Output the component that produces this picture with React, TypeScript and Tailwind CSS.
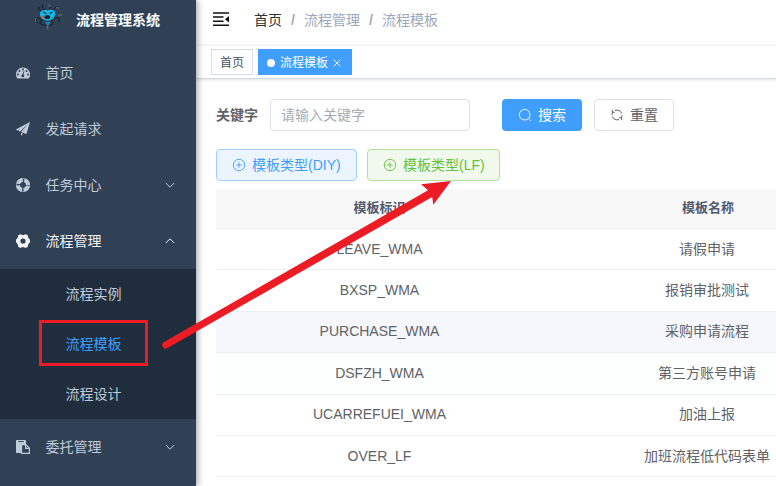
import React from "react";

function DashboardIcon() {
  return (
    <svg className="h-[14px] w-[14px]" viewBox="0 0 14 14">
      <path fill="currentColor" d="M7 1.5a7 7 0 0 0-7 7c0 1.4.4 2.7 1.1 3.8.1.2.3.2.5.2h10.8c.2 0 .4 0 .5-.2A7 7 0 0 0 7 1.5Z" />
      <g fill="#304156">
        <circle cx="2" cy="8.5" r="1" />
        <circle cx="3.5" cy="5" r="1" />
        <circle cx="7" cy="3.5" r="1" />
        <circle cx="10.5" cy="5" r="1" />
        <circle cx="12" cy="8.5" r="1" />
        <circle cx="6.8" cy="9.7" r="1.5" />
      </g>
      <path d="M6.8 9.5 7.8 5.6" stroke="#304156" strokeWidth="0.9" strokeLinecap="round" />
    </svg>
  );
}

function PlaneIcon() {
  return (
    <svg className="h-[14px] w-[14px]" viewBox="0 0 128 128" fill="currentColor">
      <path d="m1.500 70.100 36.200 16.200 69.900-65.500-61.400 70.600 46.500 18.700c1.100.4 2.400-.2 2.800-1.400L128 0 1.300 65.900c-1.200.6-1.700 2-1.300 3.100.3.500.8.900 1.500 1.100Zm44.700 57.800 18-20.700-18-7.800Z" />
    </svg>
  );
}

function RingIcon() {
  return (
    <svg className="h-[14px] w-[14px]" viewBox="0 0 14 14" fill="none">
      <circle cx="7" cy="7" r="6.500" stroke="currentColor" strokeWidth="1" opacity="0.6" />
      <circle cx="7" cy="7" r="5" stroke="currentColor" strokeWidth="4" strokeDasharray="6.3 1.554" strokeDashoffset="-0.777" />
    </svg>
  );
}

function NutIcon() {
  return (
    <svg className="h-[14px] w-[14px]" viewBox="0 0 14 14">
      <path
        fill="currentColor"
        fillRule="evenodd"
        d="M4.500.2c.9 0 1.300.9 2.500.9S8.600.2 9.500.2c.9.200 1.800.7 2.400 1.400.2.900 0 1.500.400 2.200.4.700 1.200.9 1.500 1.600.300 1 .300 2.200 0 3.200-.300.700-1.100.900-1.500 1.600-.4.700-.2 1.300-.4 2.200-.6.700-1.500 1.200-2.400 1.400-.9 0-1.300-.9-2.500-.9s-1.600.9-2.500.9c-.9-.2-1.800-.7-2.400-1.400-.2-.9 0-1.500-.4-2.200C1.300 9.500.5 9.300.2 8.600c-.3-1-.3-2.200 0-3.200.3-.7 1.100-.9 1.500-1.600.4-.7.2-1.300.4-2.200C2.700.9 3.600.4 4.500.2ZM7 4.400a2.600 2.600 0 1 0 0 5.200 2.600 2.600 0 0 0 0-5.200Z"
      />
    </svg>
  );
}

function PasteIcon() {
  return (
    <svg className="h-[14px] w-[14px]" viewBox="0 0 14 14">
      <path fill="currentColor" d="M0 .5C0 .2.2 0 .5 0h9c.3 0 .5.2.5.5V4H6.200c-.8 0-1.200.400-1.200 1.200V13H.5c-.3 0-.5-.2-.5-.5Z" />
      <path d="M2.200 1.500h5.600" stroke="#304156" strokeWidth="0.9" />
      <path fill="none" stroke="currentColor" strokeWidth="1.200" d="M5.600 4.600h4.200l3.600 3.600v5.200H5.600ZM9.600 4.600v3.800h3.800" />
    </svg>
  );
}

function Chevron({ up = false }: { up?: boolean }) {
  return (
    <svg className="mr-5 ml-auto h-3 w-3" viewBox="0 0 12 12" fill="none" stroke="currentColor" strokeWidth="1">
      <path d={up ? "M1.800 8 6 3.800 10.200 8" : "M1.800 4 6 8.200 10.200 4"} />
    </svg>
  );
}

function AntLogo() {
  return (
    <svg className="h-8 w-7 shrink-0" viewBox="0 0 28 32" fill="none">
      <g stroke="#1b2530" strokeWidth="1.200" strokeLinecap="round">
        <path d="M7 11C4 10 4 7 6 7M11 10C8 8 8 6 9 5M19 11c1-4 4-5 5-3M7 19c-4-3-6 1-4 3M9 20c-4 1-4 4 0 5 3 1 5 0 6-2M19 19c4-3 7-1 6 3M18 21c3 3-1 5-5 3M16 9c2-2 1-4 0-4" />
      </g>
      <path d="M14 6c1-2 3-1 3 1M22 8c2-1 3 0 3 1M24 15h4M3 18c-2 1-2 2-1 4" stroke="#717b87" strokeWidth="0.900" />
      <path d="M6 14c0-4 4-4.500 7.500-3.500 3-1.300 7.500-1 7.800 2.800.2 4.200-3.300 7-7.300 7.200C9.700 20.500 6 18 6 14Z" fill="#14b9ea" />
      <path d="M11 21.500c2 1 4 1 5.500-.5L15 25h-2Z" fill="#1593b8" />
      <path d="m9 12 3.500 1.700M18.500 12l-3 1.700" stroke="#14242f" strokeWidth="1.200" />
      <ellipse cx="13.300" cy="17" rx="2.900" ry="2" fill="#17222d" />
      <path d="M7 16.500h3M7.500 18h2" stroke="#c5604c" strokeWidth="1.300" />
      <path d="M13.500 25v4.500" stroke="#5a6874" strokeWidth="1.500" />
    </svg>
  );
}

function PlusCircle() {
  return (
    <svg className="h-[14px] w-[14px]" viewBox="0 0 14 14" fill="none" stroke="currentColor" strokeWidth="0.900">
      <circle cx="7" cy="7" r="5.700" />
      <path d="M7 4.200v5.600M4.200 7h5.600" />
    </svg>
  );
}

function MenuItem({ icon, label, arrow, active = false }: { icon: React.ReactNode; label: string; arrow?: "up" | "down"; active?: boolean }) {
  return (
    <li className={`flex h-14 items-center pl-4 ${active ? "text-[#f4f4f5]" : "text-[#bfcbd9]"}`}>
      {icon}
      <span className="ml-[15.5px]">{label}</span>
      {arrow && <Chevron up={arrow === "up"} />}
    </li>
  );
}

const rows = [
  { key: "LEAVE_WMA", name: "请假申请", style: "h-[41px]", cell: "pb-0" },
  { key: "BXSP_WMA", name: "报销审批测试", style: "h-[42px]", cell: "pb-[2px]" },
  { key: "PURCHASE_WMA", name: "采购申请流程", style: "h-[41px] bg-[#f5f7fc]", cell: "pb-[2px]" },
  { key: "DSFZH_WMA", name: "第三方账号申请", style: "h-[42px] bg-[#fdfffe]", cell: "pb-[2px]" },
  { key: "UCARREFUEI_WMA", name: "加油上报", style: "h-[41px]", cell: "pb-[2px]" },
  { key: "OVER_LF", name: "加班流程低代码表单", style: "h-[41px]", cell: "pb-0" },
];

export default function App() {
  return (
    <div className="relative flex h-[486px] w-[776px] overflow-hidden bg-white font-['Liberation_Sans','Noto_Sans_CJK_SC',sans-serif] text-sm whitespace-nowrap">
      <aside className="z-10 w-[196px] shrink-0 bg-[#304156] shadow-[2px_0_6px_rgba(0,21,41,0.35)]">
        <div className="flex h-[45px] items-start pl-[34px]">
          <AntLogo />
          <h1 className="ml-[14px] pt-[10px] leading-5 font-bold text-white">流程管理系统</h1>
        </div>
        <ul>
          <MenuItem icon={<DashboardIcon />} label="首页" />
          <MenuItem icon={<PlaneIcon />} label="发起请求" />
          <MenuItem icon={<RingIcon />} label="任务中心" arrow="down" />
          <MenuItem icon={<NutIcon />} label="流程管理" arrow="up" active />
          <li className="bg-[#1f2d3d] text-[#bfcbd9]">
            <div className="flex h-[50px] items-center pl-[65.5px]">流程实例</div>
            <div className="flex h-[50px] items-start pt-px pl-[39px]">
              <span className="flex h-[46px] w-[109px] items-center border-3 border-[#ed1c24] pt-px pl-[23.5px] text-[#409eff]">流程模板</span>
            </div>
            <div className="flex h-[50px] items-center pl-[65.5px]">流程设计</div>
          </li>
          <MenuItem icon={<PasteIcon />} label="委托管理" arrow="down" />
        </ul>
      </aside>

      <main className="min-w-0 flex-1">
        <header className="flex h-[45px] items-start pt-[10px] pl-[17px]">
          <svg className="mt-[2px] h-[15px] w-4" viewBox="0 0 16 15">
            <path d="M0 1h16M0 5h10.500M0 9.300h10.500M0 13.300h16" stroke="#111" strokeWidth="1.500" fill="none" />
            <path d="m16 4-4 3.200 4 3.200Z" fill="#111" />
          </svg>
          <nav className="ml-[25px] flex leading-5 text-[#97a8be]">
            <span className="text-[#303133]">首页</span>
            <b className="w-[22px] text-center text-[#a8abb2]">/</b>
            <span>流程管理</span>
            <b className="w-[22px] text-center text-[#a8abb2]">/</b>
            <span>流程模板</span>
          </nav>
        </header>

        <div className="flex h-[34px] items-start gap-[5px] border-t border-b border-t-[#f0f0f0] border-b-[#d4d8e2] pt-[3px] pl-[15px] text-xs shadow-[0_1px_3px_rgba(0,0,0,0.12)]">
          <span className="flex h-[26px] w-[42px] items-center justify-center border border-[#d8dce5] pt-px text-[#495060]">首页</span>
          <span className="flex h-[26px] w-[94px] items-center bg-[#409eff] pt-px pl-[9px] text-white">
            <i className="mr-[5px] h-2 w-2 rounded-full bg-white" />
            流程模板
            <svg className="mt-px ml-[5px] h-2 w-2" viewBox="0 0 8 8" stroke="currentColor" strokeWidth="0.900">
              <path d="m.5.5 7 7m0-7-7 7" />
            </svg>
          </span>
        </div>

        <section className="pt-5 pl-5">
          <form className="flex h-8 items-center">
            <label className="w-[54px] font-bold text-[#606266]">关键字</label>
            <input className="h-8 w-[200px] rounded border border-[#dcdfe6] px-[10px] outline-none placeholder:text-[#a8abb2]" placeholder="请输入关键字" />
            <button type="button" className="ml-8 flex h-8 w-20 items-center justify-center gap-[6px] rounded bg-[#409eff] text-white">
              <svg className="h-[14px] w-[14px]" viewBox="0 0 14 14" fill="none" stroke="currentColor" strokeWidth="0.900">
                <circle cx="6.700" cy="6.700" r="5.300" />
                <path d="m10.500 10.500 2.300 2.300" />
              </svg>
              搜索
            </button>
            <button type="button" className="ml-3 flex h-8 w-20 items-center justify-center gap-[6px] rounded border border-[#dcdfe6] text-[#606266]">
              <svg className="h-[14px] w-[14px]" viewBox="0 0 14 14" fill="none" stroke="currentColor" strokeWidth="1">
                <path d="M5 2.500A5 5 0 0 1 11.700 5.500M12 7a5 5 0 0 1-1.200 3.200M9 11.500A5 5 0 0 1 2.300 8.500M2 7a5 5 0 0 1 1.200-3.200M2.300 1.800v2.500h2.500M11.700 12.200V9.700H9.200" />
              </svg>
              重置
            </button>
          </form>

          <div className="mt-[18px] flex gap-[10px]">
            <button className="flex h-8 w-[141px] items-center gap-[6px] rounded border border-[#a0cfff] bg-[#ecf5ff] pl-[15px] text-[#409eff]">
              <PlusCircle />
              模板类型(DIY)
            </button>
            <button className="flex h-8 w-[133px] items-center gap-[6px] rounded border border-[#b3e19d] bg-[#f0f9eb] pl-[15px] text-[#67c23a]">
              <PlusCircle />
              模板类型(LF)
            </button>
          </div>

          <table className="mt-2 w-[658px] table-fixed border-separate border-spacing-0 text-center text-[#606266]">
            <thead>
              <tr className="h-10 bg-[#f8f8f9] text-[13px] text-[#515a6e]">
                <th className="w-[327px] border-b border-[#ebeef5] p-0">模板标识</th>
                <th className="w-[331px] border-b border-[#ebeef5] p-0 pr-px">模板名称</th>
              </tr>
            </thead>
            <tbody>
              {rows.map((row) => (
                <tr key={row.key} className={row.style}>
                  <td className={`border-b border-[#ebeef5] px-0 pt-0 ${row.cell}`}>{row.key}</td>
                  <td className={`border-b border-[#ebeef5] pt-0 pr-[3px] pl-0 ${row.cell}`}>{row.name}</td>
                </tr>
              ))}
            </tbody>
          </table>
        </section>
      </main>

      <svg className="pointer-events-none absolute inset-0 z-20 h-full w-full" viewBox="0 0 776 486">
        <path fill="#ed1c24" d="M164 342 428 190.300 421 184.300 451 181 433.300 204.800 432.200 196.900 167.500 348.100A3.500 3.500 0 0 1 164 342Z" />
      </svg>
    </div>
  );
}
